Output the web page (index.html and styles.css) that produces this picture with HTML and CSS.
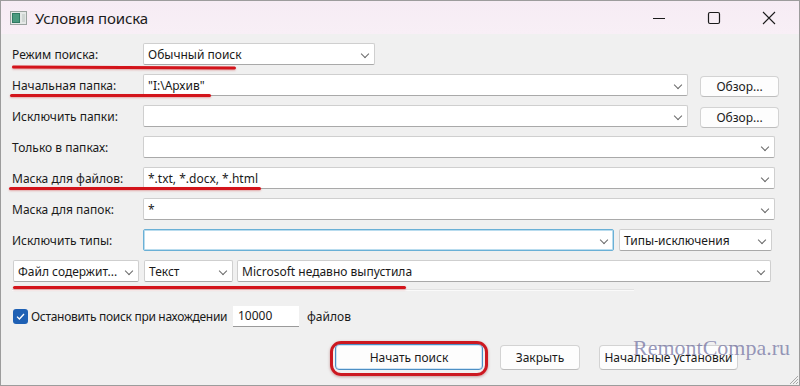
FILE: index.html
```html
<!DOCTYPE html>
<html lang="ru">
<head>
<meta charset="utf-8">
<title>Условия поиска</title>
<link rel="stylesheet" href="styles.css">
</head>
<body>
<div class="window">
  <div class="titlebar">
    <svg class="app-icon" width="17" height="14" viewBox="0 0 17 14">
      <rect x="0.5" y="0.5" width="16" height="13" fill="#e4e8e6" stroke="#9aa39f"/>
      <rect x="2" y="2" width="8" height="10" fill="#2f7a62"/>
      <rect x="3" y="3" width="6" height="8" fill="#4a9a7e"/>
      <rect x="12" y="3" width="3" height="8" fill="#cfd6d3"/>
    </svg>
    <span class="title">Условия поиска</span>
    <div class="caption-btns">
      <svg class="cap" width="46" height="33" viewBox="0 0 46 33"><line x1="17" y1="17.5" x2="29" y2="17.5" stroke="#1b1b1b" stroke-width="1"/></svg>
      <svg class="cap" width="46" height="33" viewBox="0 0 46 33"><rect x="17.5" y="11.5" width="11" height="11" rx="1.5" fill="none" stroke="#1b1b1b" stroke-width="1.2"/></svg>
      <svg class="cap" width="46" height="33" viewBox="0 0 46 33"><path d="M17 11 L29 23 M29 11 L17 23" stroke="#1b1b1b" stroke-width="1.1"/></svg>
    </div>
  </div>

  <div class="body">
    <div class="form">
      <div class="row">
        <span class="label">Режим поиска:</span>
        <div class="combo w-mode"><span class="val">Обычный поиск</span><i class="chev"></i></div>
      </div>
      <div class="row">
        <span class="label">Начальная папка:</span>
        <div class="combo w-path"><span class="val">"I:\Архив"</span><i class="chev"></i></div>
        <button class="btn browse">Обзор...</button>
      </div>
      <div class="row">
        <span class="label">Исключить папки:</span>
        <div class="combo w-path"><span class="val"></span><i class="chev"></i></div>
        <button class="btn browse">Обзор...</button>
      </div>
      <div class="row">
        <span class="label">Только в папках:</span>
        <div class="combo w-full"><span class="val"></span><i class="chev"></i></div>
      </div>
      <div class="row">
        <span class="label">Маска для файлов:</span>
        <div class="combo w-full"><span class="val">*.txt, *.docx, *.html</span><i class="chev"></i></div>
      </div>
      <div class="row">
        <span class="label">Маска для папок:</span>
        <div class="combo w-full"><span class="val">*</span><i class="chev"></i></div>
      </div>
      <div class="row">
        <span class="label">Исключить типы:</span>
        <div class="combo w-types focused"><span class="val"></span><i class="chev"></i></div>
        <div class="combo w-typex"><span class="val">Типы-исключения</span><i class="chev"></i></div>
      </div>
      <div class="row">
        <div class="combo w-contains"><span class="val">Файл содержит...</span><i class="chev"></i></div>
        <div class="combo w-text"><span class="val">Текст</span><i class="chev"></i></div>
        <div class="combo w-query"><span class="val">Microsoft недавно выпустила</span><i class="chev"></i></div>
      </div>
    </div>

    <div class="sep"></div>

    <div class="limit">
      <span class="check"><svg width="15" height="15" viewBox="0 0 15 15"><path d="M4 7.6 L6.4 10 L11 5" fill="none" stroke="#fff" stroke-width="1.3"/></svg></span>
      <span class="limit-label stop">Остановить поиск при нахождении</span>
      <span class="num">10000</span>
      <span class="limit-label">файлов</span>
    </div>

    <div class="actions">
      <button class="btn primary">Начать поиск</button>
      <button class="btn close">Закрыть</button>
      <button class="btn reset">Начальные установки</button>
    </div>

    <span class="mark m1"></span>
    <span class="mark m2"></span>
    <span class="mark m3"></span>
    <span class="mark m4"></span>
    <span class="ring"></span>
    <span class="watermark">RemontCompa.ru</span>
    <svg class="grip" width="11" height="11" viewBox="0 0 11 11">
      <path d="M10 2 L2 10 M10 5 L5 10 M10 8 L8 10" stroke="#a8a8a8" stroke-width="1"/>
    </svg>
  </div>
</div>
</body>
</html>
```

FILE: styles.css
```css
* { box-sizing: border-box; }
html, body { margin: 0; padding: 0; }
body {
  width: 800px;
  height: 386px;
  overflow: hidden;
  font-family: "Noto Sans", "Open Sans", sans-serif;
  font-size: 12px;
  color: #1a1a1a;
  background: #f0f0f0;
}
.window {
  width: 800px;
  height: 386px;
  border: 1px solid #9c9c9c;
  background: #f0f0f0;
  display: flex;
  flex-direction: column;
}
.titlebar {
  height: 33px;
  flex: none;
  display: flex;
  align-items: center;
  background: linear-gradient(#f6ecf4, #f8eff6);
  padding-left: 9px;
}
.app-icon { flex: none; margin-top: 1px; }
.title {
  margin-left: 8px;
  font-size: 15px;
  color: #1b1b1b;
  letter-spacing: -0.1px;
}
.caption-btns {
  margin-left: auto;
  display: flex;
  margin-right: 7px;
}
.cap { display: block; margin-left: 9px; }

.body {
  position: relative;
  flex: 1;
  padding: 9px 0 0 11px;
}
.form {
  display: flex;
  flex-direction: column;
  gap: 9px;
}
.row {
  display: flex;
  align-items: center;
  height: 22px;
}
.label {
  width: 131px;
  flex: none;
  white-space: nowrap;
}
.combo {
  position: relative;
  height: 22px;
  flex: none;
  background: #fff;
  border: 1px solid #cfcfcf;
  border-bottom-color: #a9a9a9;
  border-radius: 2px;
  display: flex;
  align-items: center;
  padding-left: 4px;
  white-space: nowrap;
}
.combo.focused { border-color: #6ab0d6; border-width: 1px; box-shadow: inset 0 0 0 1px #b9dcee; }
.chev {
  position: absolute;
  right: 6px;
  top: 7px;
  width: 6px;
  height: 6px;
  border-right: 1px solid #6a6a6a;
  border-bottom: 1px solid #6a6a6a;
  transform: rotate(45deg);
}
.w-mode { width: 232px; }
.w-path { width: 545px; }
.w-full { width: 632px; }
.w-types { width: 471px; }
.w-typex { width: 153px; margin-left: 5px; }
.w-contains { width: 126px; margin-left: 1px; }
.w-text { width: 89px; margin-left: 5px; }
.w-query { width: 534px; margin-left: 4px; }

.btn {
  font: inherit;
  color: #1a1a1a;
  background: #fdfdfd;
  border: 1px solid #d3d3d3;
  border-bottom-color: #bdbdbd;
  border-radius: 4px;
  padding: 0;
  height: 21px;
}
.browse { width: 79px; margin-left: 12px; margin-top: 3px; }

.sep {
  height: 0;
  width: 622px;
  border-top: 1px solid #e2e2e2;
  border-bottom: 1px solid #fafafa;
  margin-top: 7px;
}
.limit {
  display: flex;
  align-items: center;
  height: 21px;
  margin-top: 15px;
}
.check {
  width: 15px;
  height: 15px;
  background: #1e60b4;
  border-radius: 3px;
  margin-left: 1px;
  display: block;
}
.check svg { display: block; }
.limit-label { margin-left: 4px; white-space: nowrap; }
.stop { margin-left: 3px; letter-spacing: -0.3px; width: 196px; flex: none; }
.num {
  width: 66px;
  height: 21px;
  margin-left: 6px;
  margin-right: 4px;
  background: #fff;
  border-bottom: 1px solid #9a9a9a;
  padding-left: 5px;
  line-height: 20px;
}
.actions {
  display: flex;
  margin-top: 17px;
  margin-left: 323px;
  align-items: center;
}
.actions .btn { height: 25px; }
.primary {
  width: 148px;
  height: 26px !important;
  border: 1px solid #4d8fc4;
  box-shadow: inset 0 0 0 1px #cfe4f4;
}
.close { width: 80px; margin-left: 17px; }
.reset { width: 139px; margin-left: 19px; }

.mark {
  position: absolute;
  height: 3px;
  background: #d3141b;
  border-radius: 2px;
  box-shadow: 0 1px 2px rgba(200, 40, 40, 0.35);
}
.m1 { left: 11px; top: 32px; width: 224px; transform: rotate(0.3deg); }
.m2 { left: 9px; top: 60px; width: 201px; }
.m3 { left: 8px; top: 153px; width: 252px; }
.m4 { left: 12px; top: 252px; width: 393px; }
.ring {
  position: absolute;
  left: 329px;
  top: 307px;
  width: 158px;
  height: 35px;
  border: 3px solid #cc1820;
  border-radius: 11px;
  box-shadow: 0 1px 3px rgba(120, 0, 0, 0.35);
}
.watermark {
  position: absolute;
  left: 632px;
  top: 301px;
  font-family: "Liberation Serif", serif;
  font-size: 22px;
  color: rgba(96, 96, 150, 0.65);
  pointer-events: none;
}
.grip { position: absolute; right: 0; bottom: 0; }
```
